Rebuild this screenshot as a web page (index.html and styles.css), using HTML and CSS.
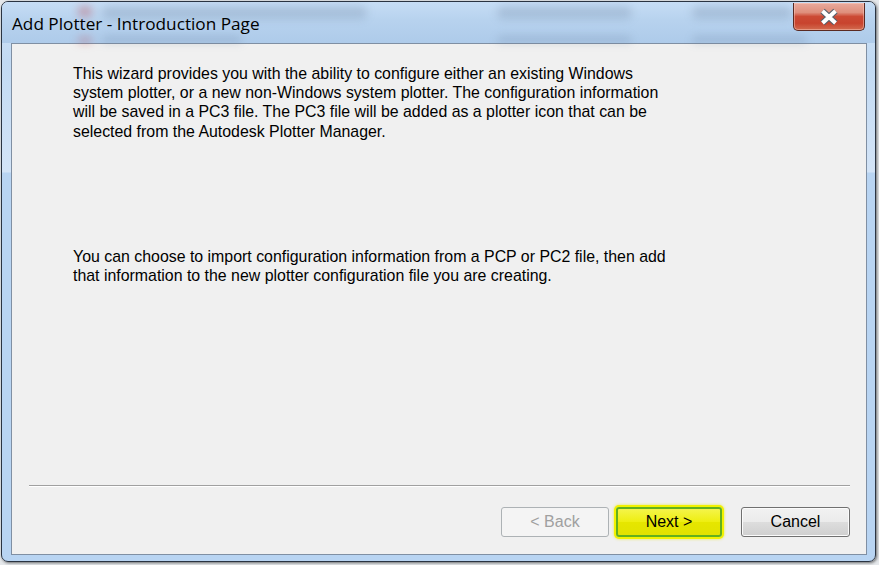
FILE: index.html
```html
<!DOCTYPE html>
<html>
<head>
<meta charset="utf-8">
<title>Add Plotter - Introduction Page</title>
<link rel="stylesheet" href="styles.css">
</head>
<body>
<div class="window">
  <div class="titlebar">
    <div class="ghost" aria-hidden="true">
      <span class="gb gb1"></span>
      <span class="gb gb2"></span>
      <span class="gb gb3"></span>
      <span class="gb gb4"></span>
      <span class="gb gb5"></span>
      <span class="gb gb6"></span>
      <span class="gi gi1"></span>
      <span class="gi gi2"></span>
    </div>
    <span class="title">Add Plotter - Introduction Page</span>
    <div class="close">
      <svg width="22" height="18" viewBox="0 0 22 18">
        <path d="M4.5 3 L17.5 15 M17.5 3 L4.5 15" stroke="#56606c" stroke-width="6.4" fill="none"/>
        <path d="M4.5 3 L17.5 15 M17.5 3 L4.5 15" stroke="#ffffff" stroke-width="4" fill="none"/>
      </svg>
    </div>
  </div>
  <div class="client">
    <div class="content">
      <p class="para">This wizard provides you with the ability to configure either an existing Windows<br>system plotter, or a new non-Windows system plotter. The configuration information<br>will be saved in a PC3 file. The PC3 file will be added as a plotter icon that can be<br>selected from the Autodesk Plotter Manager.</p>
      <p class="para para2">You can choose to import configuration information from a PCP or PC2 file, then add<br>that information to the new plotter configuration file you are creating.</p>
    </div>
    <div class="sep"></div>
    <div class="buttons">
      <div class="btn btn-disabled">&lt; Back</div>
      <div class="btn btn-next">Next &gt;</div>
      <div class="btn btn-cancel">Cancel</div>
    </div>
  </div>
</div>
</body>
</html>
```

FILE: styles.css
```css
html, body {
  margin: 0;
  padding: 0;
}
body {
  width: 879px;
  height: 565px;
  background: #e6e9ec;
  padding: 1px 0 0 1px;
  box-sizing: border-box;
  overflow: hidden;
}
.window {
  width: 875px;
  height: 561px;
  box-sizing: border-box;
  border: 1px solid #2a3442;
  border-radius: 7px;
  background: linear-gradient(180deg, #cfe2f6 0px, #c2daf3 60px, #d3e4f7 170px, #b8d4f2 171px, #b8d4f2 100%);
  box-shadow: 1px 1px 3px rgba(0,0,0,0.55);
  display: flex;
  flex-direction: column;
  padding: 0 8px 6px 9px;
  overflow: hidden;
}
.titlebar {
  height: 41px;
  flex: none;
  position: relative;
  display: flex;
  align-items: flex-start;
  margin: 0 -8px 0 -9px;
  padding: 0 8px 0 10px;
  background: linear-gradient(180deg, #c6ddf5 0%, #b7d2ee 45%, #aecbea 100%);
}
.ghost {
  position: absolute;
  inset: 0;
  overflow: hidden;
  filter: blur(4px);
  pointer-events: none;
}
.gb {
  position: absolute;
  height: 13px;
  border-radius: 6px;
  background: rgba(80, 100, 128, 0.2);
}
.gb1 { left: 100px; top: 4px; width: 265px; }
.gb2 { left: 495px; top: 4px; width: 135px; }
.gb3 { left: 690px; top: 4px; width: 100px; }
.gb4 { left: 100px; top: 34px; width: 140px; }
.gb5 { left: 495px; top: 34px; width: 135px; }
.gb6 { left: 690px; top: 34px; width: 115px; }
.gi {
  position: absolute;
  width: 14px;
  height: 11px;
  background: rgba(190, 80, 90, 0.4);
  border-radius: 4px;
}
.gi1 { left: 76px; top: 4px; }
.gi2 { left: 76px; top: 35px; }
.title {
  font-family: "Open Sans", "Noto Sans", sans-serif;
  font-size: 17.2px;
  color: #000;
  margin-top: 10px;
  position: relative;
}
.close {
  position: absolute;
  left: 791px;
  top: 1px;
  width: 72px;
  height: 28px;
  box-sizing: border-box;
  border: 1px solid #5a2a22;
  border-top: none;
  border-radius: 0 0 5px 5px;
  background: linear-gradient(180deg, #e9aa9c 0%, #df8f7d 35%, #cc4a35 50%, #c8432e 75%, #d26b4f 100%);
  box-shadow: inset 0 0 0 1px rgba(255, 210, 200, 0.45);
  display: flex;
  align-items: center;
  justify-content: center;
}
.close svg { display: block; margin-top: 1px; }
.client {
  flex: 1;
  border: 1px solid #7f8fa3;
  background: #f0f0f0;
  display: flex;
  flex-direction: column;
}
.content {
  flex: 1;
  padding: 20px 0 0 61px;
}
.para {
  margin: 0;
  font-family: "Liberation Sans", Arial, sans-serif;
  font-size: 15.9px;
  line-height: 19.2px;
  color: #000;
  white-space: nowrap;
}
.para2 { margin-top: 106px; }
.sep {
  margin: 0 16px 0 17px;
  height: 0;
  border-top: 1px solid #a0a0a0;
  border-bottom: 1px solid #ffffff;
}
.buttons {
  display: flex;
  justify-content: flex-end;
  align-items: center;
  padding: 20px 16px 17px 0;
}
.btn {
  height: 30px;
  box-sizing: border-box;
  border-radius: 3px;
  display: flex;
  align-items: center;
  justify-content: center;
  font-family: "Liberation Sans", Arial, sans-serif;
  font-size: 16px;
  color: #000;
}
.btn-disabled {
  width: 108px;
  border: 1px solid #adb2b5;
  background: #f4f4f4;
  color: #a0a0a0;
}
.btn-next {
  width: 106px;
  margin-left: 7px;
  border: 2px solid #62b01e;
  background: linear-gradient(180deg, #f4f44a 0%, #eeee10 50%, #e6e600 51%, #e2e200 100%);
  box-shadow: 0 0 0 2px #f2f200, 0 0 3px 2px rgba(230, 230, 0, 0.7);
}
.btn-cancel {
  width: 109px;
  margin-left: 19px;
  border: 1px solid #707070;
  background: linear-gradient(180deg, #f2f2f2 0%, #ebebeb 50%, #dddddd 51%, #cfcfcf 100%);
  box-shadow: inset 0 0 0 1px #fbfbfb;
}
```
